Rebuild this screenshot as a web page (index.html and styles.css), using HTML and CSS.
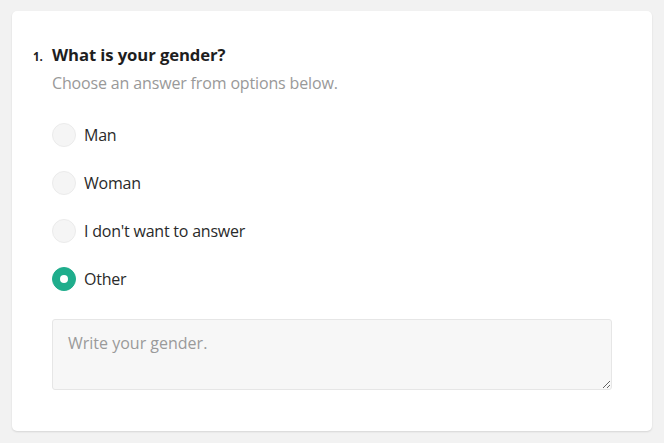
FILE: index.html
```html
<!DOCTYPE html>
<html>
<head>
<meta charset="utf-8">
<link rel="stylesheet" href="styles.css">
</head>
<body>
<div class="card">
  <div class="question">
    <div class="num">1.</div>
    <div class="body">
      <div class="title">What is your gender?</div>
      <div class="subtitle">Choose an answer from options below.</div>
      <div class="options">
        <label class="option"><span class="radio"></span><span class="label">Man</span></label>
        <label class="option"><span class="radio"></span><span class="label">Woman</span></label>
        <label class="option"><span class="radio"></span><span class="label">I don't want to answer</span></label>
        <label class="option"><span class="radio checked"></span><span class="label">Other</span></label>
      </div>
      <textarea class="other" placeholder="Write your gender."></textarea>
    </div>
  </div>
</div>
</body>
</html>
```
FILE: styles.css
```css
html, body {
  margin: 0;
  padding: 0;
  background: #f2f2f2;
}
body {
  padding: 11px 12px;
  font-family: "Open Sans", "Noto Sans", sans-serif;
}
.card {
  width: 640px;
  height: 420px;
  box-sizing: border-box;
  background: #fff;
  border-radius: 5px;
  box-shadow: 0 1px 2px rgba(0,0,0,0.12);
  padding: 34px 40px 40px 21px;
}
.question {
  display: flex;
}
.num {
  width: 19px;
  font-size: 11.5px;
  font-weight: 700;
  color: #222;
  line-height: 20px;
  padding-top: 2px;
}
.body {
  flex: 1;
  display: flex;
  flex-direction: column;
}
.title {
  font-size: 16.7px;
  font-weight: 700;
  color: #1e1e1e;
  line-height: 20px;
  letter-spacing: -0.1px;
}
.subtitle {
  margin-top: 8px;
  font-size: 16px;
  color: #999;
  line-height: 20px;
  letter-spacing: -0.15px;
}
.options {
  margin-top: 30px;
  display: flex;
  flex-direction: column;
  gap: 24px;
}
.option {
  display: flex;
  align-items: center;
  gap: 8px;
  height: 24px;
}
.radio {
  width: 24px;
  height: 24px;
  box-sizing: border-box;
  border-radius: 50%;
  background: #f5f5f5;
  border: 1px solid #ebebeb;
}
.radio.checked {
  background: #1fad8c;
  border-color: #1fad8c;
  display: flex;
  align-items: center;
  justify-content: center;
}
.radio.checked::after {
  content: "";
  width: 8px;
  height: 8px;
  border-radius: 50%;
  background: #fff;
}
.label {
  font-size: 16px;
  color: #2a2a2a;
  line-height: 22px;
  letter-spacing: -0.22px;
}
.other {
  margin: 28px 0 0;
  height: 71px;
  box-sizing: border-box;
  background: #f7f7f7;
  border: 1px solid #e6e6e6;
  border-radius: 3px;
  padding: 12px 15px;
  font-family: "Open Sans", "Noto Sans", sans-serif;
  font-size: 16px;
  line-height: 22px;
  color: #333;
  outline: none;
}
.other::placeholder {
  color: #9a9a9a;
}
```
